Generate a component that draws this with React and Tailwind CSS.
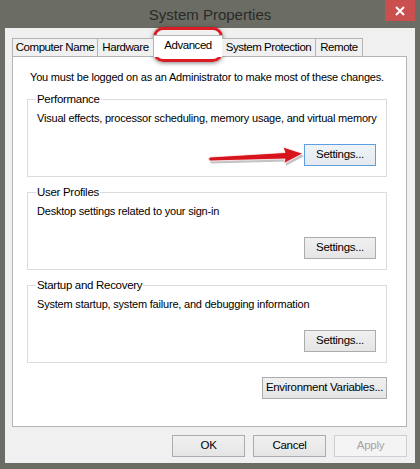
import React from "react";

function Btn({ children, className = "", variant = "normal" }) {
  let look =
    "border-[#acacac] bg-gradient-to-b from-[#f0f0f0] to-[#e5e5e5] text-black";
  if (variant === "focus")
    look = "border-[#5d9fe0] bg-gradient-to-b from-[#eef3f8] to-[#e3e9ef] text-black";
  if (variant === "disabled")
    look = "border-[#cfcfcf] bg-[#f4f4f4] text-[#a3a3a3]";
  return (
    <div
      className={`h-[22px] flex items-center justify-center border text-[11.5px] tracking-[-0.3px] leading-none whitespace-nowrap ${look} ${className}`}
    >
      {children}
    </div>
  );
}

function Group({ title, desc, variant = "normal", className = "" }) {
  return (
    <fieldset
      className={`min-w-0 border border-[#dcdcdc] ml-[14px] mr-[19px] pl-[9px] pr-[10px] pb-[10px] ${className}`}
    >
      <legend className="px-[1px] -ml-[1px] text-[11.5px] tracking-[-0.3px] leading-[14px] text-black">
        {title}
      </legend>
      <div className="mt-[5px] text-[11px] tracking-[-0.2px] leading-[14px] text-black whitespace-nowrap">
        {desc}
      </div>
      <div className="flex justify-end mt-[19px]">
        <Btn variant={variant} className="w-[72px]">
          Settings...
        </Btn>
      </div>
    </fieldset>
  );
}

export default function App() {
  return (
    <div className="relative w-[420px] h-[469px] bg-[#6b6c63] px-[5px] pb-[6px] font-['Liberation_Sans',Arial,sans-serif] overflow-hidden">
      {/* Title bar */}
      <div className="relative h-[28px] flex items-center justify-center">
        <span className="text-[15px] text-[#2a2a2a] leading-none mt-[1px]">
          System Properties
        </span>
        <div className="absolute right-0 top-0 w-[30px] h-[21px] bg-[#c9504f] flex items-center justify-center">
          <svg width="10" height="10" viewBox="0 0 10 10">
            <path d="M1 1 L9 9 M9 1 L1 9" stroke="#ffffff" strokeWidth="2" />
          </svg>
        </div>
      </div>

      {/* Client area */}
      <div className="h-[435px] bg-[#f0f0f0] pt-[10px] pl-[7px] pr-[8px] flex flex-col">
        {/* Tabs */}
        <div className="flex items-end h-[18px] relative z-10 text-[11.5px] tracking-[-0.45px] text-black">
          <div className="h-[18px] w-[86px] border border-b-0 border-[#b4b4b4] bg-[#f0f0f0] flex items-center justify-center">
            Computer Name
          </div>
          <div className="h-[18px] w-[56px] border border-b-0 border-l-0 border-[#b4b4b4] bg-[#f0f0f0] flex items-center justify-center">
            Hardware
          </div>
          <div className="h-[22px] w-[70px] -mx-[1px] mb-[-1px] border border-b-0 border-[#b4b4b4] bg-white flex items-center justify-center pb-[1px]">
            Advanced
          </div>
          <div className="h-[18px] w-[94px] border border-b-0 border-l-0 border-[#b4b4b4] bg-[#f0f0f0] flex items-center justify-center">
            System Protection
          </div>
          <div className="h-[18px] w-[47px] border border-b-0 border-l-0 border-[#b4b4b4] bg-[#f0f0f0] flex items-center justify-center">
            Remote
          </div>
        </div>

        {/* Panel */}
        <div className="h-[371px] border border-[#b4b4b4] bg-white pt-[13px] flex flex-col">
          <div className="pl-[17px] text-[11px] tracking-[-0.2px] leading-[14px] text-black whitespace-nowrap">
            You must be logged on as an Administrator to make most of these changes.
          </div>
          <Group
            className="mt-[8px]"
            title="Performance"
            desc="Visual effects, processor scheduling, memory usage, and virtual memory"
            variant="focus"
          />
          <Group
            className="mt-[8px]"
            title="User Profiles"
            desc="Desktop settings related to your sign-in"
          />
          <Group
            className="mt-[8px]"
            title="Startup and Recovery"
            desc="System startup, system failure, and debugging information"
          />
          <div className="flex justify-end mr-[19px] mt-[14px]">
            <Btn className="w-[125px]">Environment Variables...</Btn>
          </div>
        </div>

        {/* Bottom buttons */}
        <div className="flex justify-end gap-[8px] mt-[8px]">
          <Btn className="w-[73px]">OK</Btn>
          <Btn className="w-[73px]">Cancel</Btn>
          <Btn className="w-[73px]" variant="disabled">
            Apply
          </Btn>
        </div>
      </div>

      {/* Red highlight around Advanced tab (annotation overlay) */}
      <div className="absolute left-[153px] top-[27px] w-[70px] h-[35px] rounded-[10px] border-[3px] border-[#dc1c24] shadow-[0_1px_4px_rgba(0,0,0,0.5),inset_0_0_2px_rgba(255,255,255,0.9)]" />

      {/* Red arrow annotation overlay */}
      <svg
        className="absolute left-[205px] top-[140px]"
        width="105"
        height="32"
        viewBox="0 0 105 32"
      >
        <path
          d="M5 17 L80 12.5 L78 7 L98 13.5 L79 23.5 L80 19 L5 21 Q2 19 5 17 Z"
          fill="#7a7a7a"
          opacity="0.45"
          transform="translate(1.5 2.5)"
        />
        <path
          d="M5 17 L80 12.5 L78 7 L98 13.5 L79 23.5 L80 19 L5 21 Q2 19 5 17 Z"
          fill="#d7141c"
          stroke="#ffffff"
          strokeWidth="0.8"
          strokeLinejoin="round"
        />
      </svg>
    </div>
  );
}
